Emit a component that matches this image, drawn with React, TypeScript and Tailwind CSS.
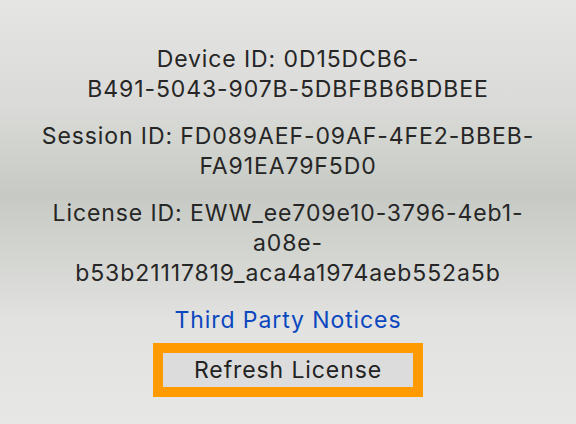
export default function App() {
    return (
        <div className="w-[576px] h-[424px] overflow-hidden bg-[linear-gradient(to_bottom,#e5e5e3_0%,#dadbd8_25%,#c7cac4_46%,#d3d5d1_60%,#e2e2e0_76%,#e7e7e6_100%)] font-['Inter',sans-serif] text-[23px] tracking-[0.9px] leading-[30px] text-[#262626] flex flex-col items-center pt-[44px] text-center">
            <div>
                <div>Device ID: 0D15DCB6-</div>
                <div>B491-5043-907B-5DBFBB6BDBEE</div>
            </div>
            <div className="mt-[17px]">
                <div>Session ID: FD089AEF-09AF-4FE2-BBEB-</div>
                <div>FA91EA79F5D0</div>
            </div>
            <div className="mt-[17px]">
                <div>License ID: EWW_ee709e10-3796-4eb1-</div>
                <div>a08e-</div>
                <div>b53b21117819_aca4a1974aeb552a5b</div>
            </div>
            <div className="mt-[17px] text-[#0b47bf]">Third Party Notices</div>
            <div className="mt-[8px] border-[10px] border-[#ff9a00]">
                <div className="w-[250px] h-[34px] bg-[#dcdcdc] flex items-center justify-center text-[#222]">Refresh License</div>
            </div>
        </div>
    )
}
